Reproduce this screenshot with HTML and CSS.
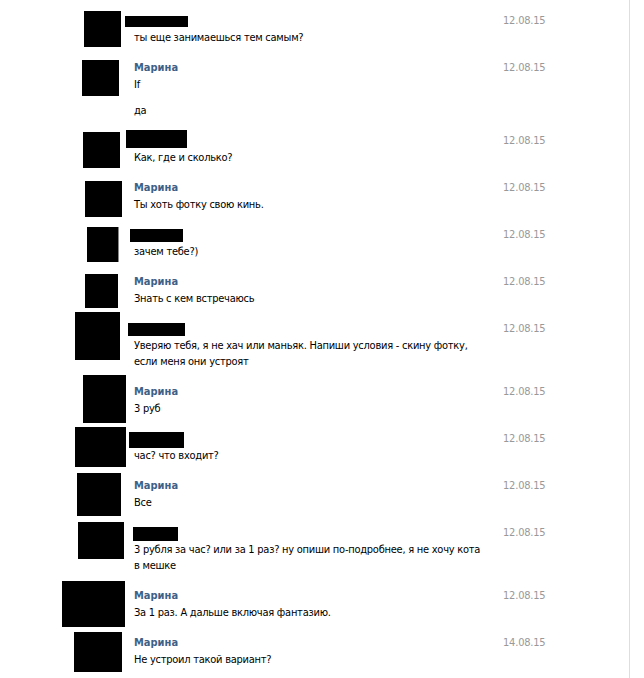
FILE: index.html
```html
<!DOCTYPE html>
<html lang="ru">
<head>
<meta charset="utf-8">
<title>Диалог</title>
<link rel="stylesheet" href="styles.css">
</head>
<body>
<div class="im">
  <div class="msg">
    <div class="ava"><span class="box b1"></span></div>
    <div class="body"><div class="name"><span class="bar n1"></span>&nbsp;</div><div class="text">ты еще занимаешься тем самым?</div></div>
    <div class="date">12.08.15</div>
  </div>
  <div class="msg">
    <div class="ava"><span class="box b2"></span></div>
    <div class="body"><div class="name"><a class="who">Марина</a></div><div class="text">If</div><div class="text more">да</div></div>
    <div class="date">12.08.15</div>
  </div>
  <div class="msg">
    <div class="ava"><span class="box b3"></span></div>
    <div class="body"><div class="name"><span class="bar n3"></span>&nbsp;</div><div class="text">Как, где и сколько?</div></div>
    <div class="date">12.08.15</div>
  </div>
  <div class="msg">
    <div class="ava"><span class="box b4"></span></div>
    <div class="body"><div class="name"><a class="who">Марина</a></div><div class="text">Ты хоть фотку свою кинь.</div></div>
    <div class="date">12.08.15</div>
  </div>
  <div class="msg">
    <div class="ava"><span class="box b5"></span></div>
    <div class="body"><div class="name"><span class="bar n5"></span>&nbsp;</div><div class="text">зачем тебе?)</div></div>
    <div class="date">12.08.15</div>
  </div>
  <div class="msg">
    <div class="ava"><span class="box b6"></span></div>
    <div class="body"><div class="name"><a class="who">Марина</a></div><div class="text">Знать с кем встречаюсь</div></div>
    <div class="date">12.08.15</div>
  </div>
  <div class="msg">
    <div class="ava"><span class="box b7"></span></div>
    <div class="body"><div class="name"><span class="bar n7"></span>&nbsp;</div><div class="text">Уверяю тебя, я не хач или маньяк. Напиши условия - скину фотку,<br>если меня они устроят</div></div>
    <div class="date">12.08.15</div>
  </div>
  <div class="msg">
    <div class="ava"><span class="box b8"></span></div>
    <div class="body"><div class="name"><a class="who">Марина</a></div><div class="text">3 руб</div></div>
    <div class="date">12.08.15</div>
  </div>
  <div class="msg">
    <div class="ava"><span class="box b9"></span></div>
    <div class="body"><div class="name"><span class="bar n9"></span>&nbsp;</div><div class="text">час? что входит?</div></div>
    <div class="date">12.08.15</div>
  </div>
  <div class="msg">
    <div class="ava"><span class="box b10"></span></div>
    <div class="body"><div class="name"><a class="who">Марина</a></div><div class="text">Все</div></div>
    <div class="date">12.08.15</div>
  </div>
  <div class="msg">
    <div class="ava"><span class="box b11"></span></div>
    <div class="body"><div class="name"><span class="bar n11"></span>&nbsp;</div><div class="text">3 рубля за час? или за 1 раз? ну опиши по-подробнее, я не хочу кота<br>в мешке</div></div>
    <div class="date">12.08.15</div>
  </div>
  <div class="msg">
    <div class="ava"><span class="box b12"></span></div>
    <div class="body"><div class="name"><a class="who">Марина</a></div><div class="text">За 1 раз. А дальше включая фантазию.</div></div>
    <div class="date">12.08.15</div>
  </div>
  <div class="msg">
    <div class="ava"><span class="box b13"></span></div>
    <div class="body"><div class="name"><a class="who">Марина</a></div><div class="text">Не устроил такой вариант?</div></div>
    <div class="date">14.08.15</div>
  </div>
</div>
</body>
</html>
```

FILE: styles.css
```css
html, body {
  margin: 0;
  padding: 0;
  background: #fff;
}
body {
  font-family: "DejaVu Sans Condensed", "DejaVu Sans", sans-serif;
  font-size: 11px;
  color: #000;
}
.im {
  width: 630px;
  height: 678px;
  box-sizing: border-box;
  border-right: 1px solid #d9dfe8;
  padding-top: 5px;
}
.msg {
  display: grid;
  grid-template-columns: 134px 369px 1fr;
  padding: 7px 0;
}
.ava {
  position: relative;
}
.body {
  position: relative;
  white-space: nowrap;
}
.name {
  height: 17px;
  line-height: 17px;
}
.who {
  color: #3e6188;
  font-weight: bold;
  text-decoration: none;
}
.text {
  line-height: 16px;
  letter-spacing: -0.25px;
  position: relative;
  top: 1px;
}
.more {
  margin-top: 10px;
}
.date {
  color: #999;
  line-height: 17px;
  letter-spacing: -0.2px;
}
.box, .bar {
  position: absolute;
  background: #000;
}
/* redaction boxes over avatars (offsets relative to the message row content) */
.b1  { left: 84px; top: -1px; width: 37px; height: 36px; }
.b2  { left: 82px; top: 1px;  width: 37px; height: 36px; }
.b3  { left: 83px; top: 0;    width: 37px; height: 36px; }
.b4  { left: 85px; top: 2px;  width: 37px; height: 36px; }
.b5  { left: 87px; top: 1px;  width: 31px; height: 35px; box-shadow: 1px 0 0 #888; }
.b6  { left: 85px; top: 1px;  width: 33px; height: 34px; }
.b7  { left: 75px; top: -8px; width: 45px; height: 48px; }
.b8  { left: 83px; top: -8px; width: 43px; height: 48px; }
.b9  { left: 75px; top: -3px; width: 51px; height: 40px; }
.b10 { left: 77px; top: -4px; width: 44px; height: 43px; }
.b11 { left: 78px; top: -2px; width: 46px; height: 37px; }
.b12 { left: 62px; top: -6px; width: 63px; height: 46px; }
.b13 { left: 74px; top: -2px; width: 48px; height: 40px; }
/* redaction bars over names (relative to text column) */
.n1  { left: -9px; top: 4px;  width: 63px; height: 11px; }
.n3  { left: -8px; top: -2px; width: 61px; height: 18px; }
.n5  { left: -4px; top: 3px;  width: 53px; height: 13px; }
.n7  { left: -6px; top: 3px;  width: 57px; height: 13px; }
.n9  { left: -5px; top: 2px;  width: 55px; height: 16px; }
.n11 { left: -1px; top: 3px;  width: 45px; height: 14px; }
```
